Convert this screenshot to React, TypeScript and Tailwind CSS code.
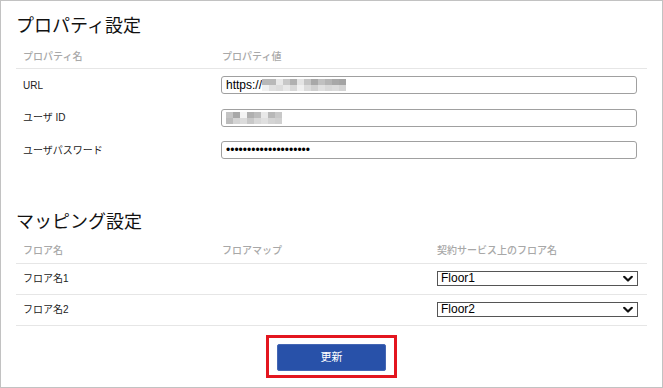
import React from 'react'

const jp = { fontFamily: '"Liberation Sans", "Noto Sans CJK JP", sans-serif' }

// pixelated blur blocks used where the reference hides a value
function Mosaic({ rows }:{ rows: string[][] }){
  return (
    <span className="inline-flex flex-col align-middle">
      {rows.map((r, i) => (
        <span key={i} className="flex">
          {r.map((c, j) => <span key={j} className="block w-[7px] h-[6px]" style={{ background: c }} />)}
        </span>
      ))}
    </span>
  )
}

const urlMosaic = [
  ['#b8b8b8','#b8b8b8','#e8e8e8','#c8c8c8','#b0b0b0','#e4e4e4','#c4c4c4','#a8a8a8','#c0c0c0','#b4b4b4','#a8a8a8','#a4a4a4'],
  ['#f0f0f0','#e0e0e0','#dcdcdc','#e8e8e8','#d8d8d8','#f0f0f0','#dcdcdc','#d0d0d0','#e0e0e0','#d8d8d8','#dcdcdc','#d4d4d4'],
]
const idMosaic = [
  ['#c4c4c4','#a8a8a8','#f4f4f4','#b0b0b0','#bcbcbc','#e8e8e8','#b8b8b8','#c8c8c8'],
  ['#bcbcbc','#d4d4d4','#dcdcdc','#c8c8c8','#d8d8d8','#e0e0e0','#d4d4d4','#d0d0d0'],
]

function Chevron(){
  return (
    <svg width="10" height="7" viewBox="0 0 10 7" className="pointer-events-none absolute right-[5px] top-1/2 -translate-y-1/2">
      <path d="M1.2 1.3 L5 5 L8.8 1.3" fill="none" stroke="#111" strokeWidth="2.2" strokeLinecap="round" strokeLinejoin="round" />
    </svg>
  )
}

function FloorSelect({ value }:{ value:string }){
  return (
    <div className="relative w-[201px]">
      <select defaultValue={value} className="block w-full h-[15px] appearance-none rounded-none border border-[#555] bg-white pl-[3px] text-[12px] leading-[13px] text-black outline-none" style={jp}>
        <option>Floor1</option>
        <option>Floor2</option>
      </select>
      <Chevron />
    </div>
  )
}

export default function App(){
  const headCls = "text-[10px] text-[#a8a8a8] font-medium"
  const inputCls = "w-full h-[18px] rounded-[3px] border border-[#a0a0a0] bg-white px-[4px] text-[12px] text-black outline-none flex items-center"
  return (
    <div className="w-[663px] h-[388px] border border-[#c2c2c2] bg-white px-[15px] text-[#222]" style={jp}>
      {/* property settings */}
      <div className="pt-[12px] text-[18px] leading-[26px] text-[#111] mb-[5px]">プロパティ設定</div>
      <div className="grid grid-cols-[199px_1fr] h-[25px] items-center border-b border-[#e6e6e6]">
        <div className={"pl-[7px] " + headCls}>プロパティ名</div>
        <div className={"pl-[7px] " + headCls}>プロパティ値</div>
      </div>
      <div className="grid grid-cols-[199px_1fr] h-[32.5px] items-center">
        <div className="pl-[7px] text-[10px]">URL</div>
        <div className="pl-[6px] pr-[10px]">
          <div className={inputCls}>https://<Mosaic rows={urlMosaic} /></div>
        </div>
      </div>
      <div className="grid grid-cols-[199px_1fr] h-[32.5px] items-center">
        <div className="pl-[7px] text-[10px]">ユーザ ID</div>
        <div className="pl-[6px] pr-[10px]">
          <div className={inputCls}><Mosaic rows={idMosaic} /></div>
        </div>
      </div>
      <div className="grid grid-cols-[199px_1fr] h-[32.5px] items-center">
        <div className="pl-[7px] text-[10px]">ユーザパスワード</div>
        <div className="pl-[6px] pr-[10px]">
          <input type="password" readOnly value="xxxxxxxxxxxxxxxxxxxx" className={inputCls} />
        </div>
      </div>

      {/* mapping settings */}
      <div className="pt-[42px] text-[18px] leading-[26px] text-[#111] mb-[4px]">マッピング設定</div>
      <div className="grid grid-cols-[199px_215px_1fr] h-[25px] items-center border-b border-[#e6e6e6]">
        <div className={"pl-[7px] " + headCls}>フロア名</div>
        <div className={"pl-[7px] " + headCls}>フロアマップ</div>
        <div className={"pl-[7px] " + headCls}>契約サービス上のフロア名</div>
      </div>
      {['1','2'].map(n => (
        <div key={n} className="grid grid-cols-[199px_215px_1fr] h-[31px] items-center border-b border-[#e6e6e6]">
          <div className="pl-[7px] text-[10px]">フロア名{n}</div>
          <div />
          <div className="pl-[7px]"><FloorSelect value={'Floor' + n} /></div>
        </div>
      ))}

      <div className="flex justify-center pt-[9px]">
        <div className="border-[3px] border-[#e3161f] px-[8px] pt-[6px] pb-[4px]">
          <button className="w-[109px] h-[27px] rounded-[2px] bg-[#2851a9] border border-[#4567b4] text-white text-[11px]" style={jp}>更新</button>
        </div>
      </div>
    </div>
  )
}
